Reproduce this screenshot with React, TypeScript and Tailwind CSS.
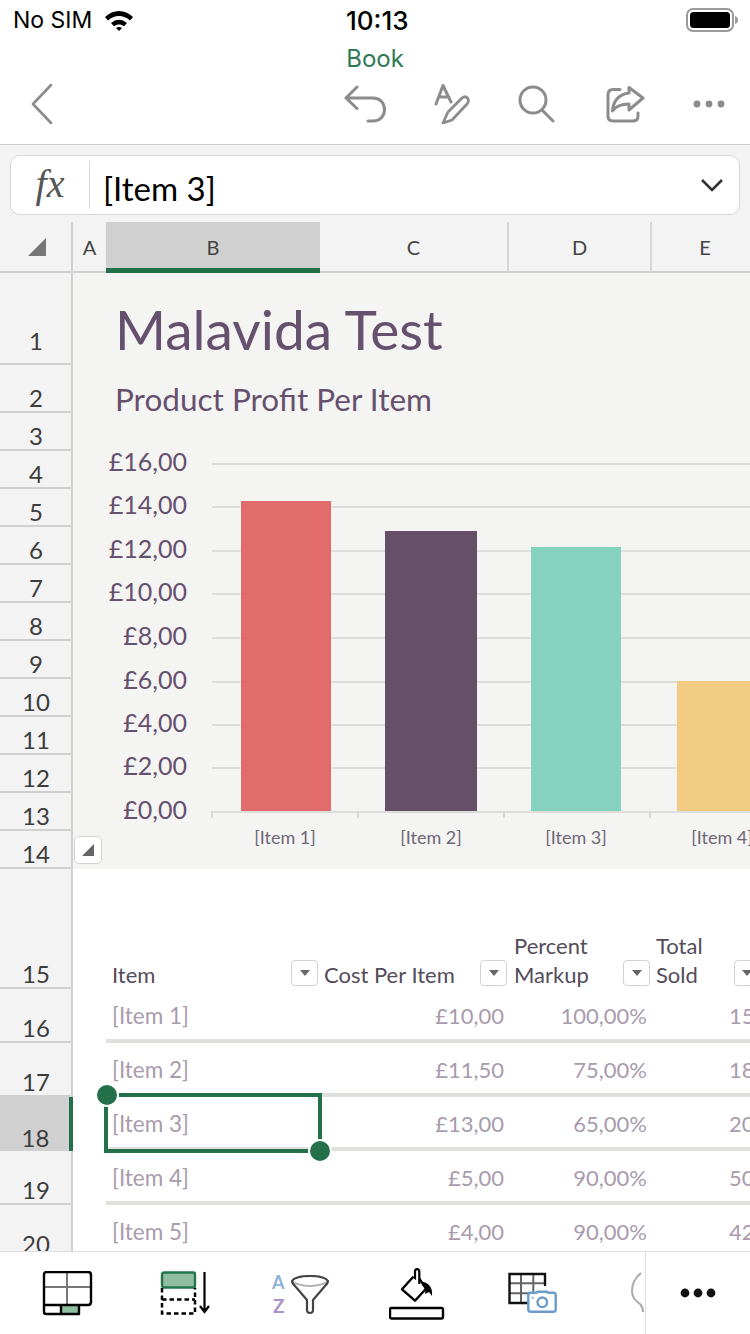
import React from "react";

const rows: [string, number][] = [
  ["1", 92], ["2", 48], ["3", 38], ["4", 38], ["5", 38], ["6", 38], ["7", 38],
  ["8", 38], ["9", 38], ["10", 38], ["11", 38], ["12", 38], ["13", 38], ["14", 38],
  ["15", 120], ["16", 54], ["17", 54], ["18", 54], ["19", 54], ["20", 54],
];

const items = [
  ["[Item 1]", "£10,00", "100,00%", "15"],
  ["[Item 2]", "£11,50", "75,00%", "18"],
  ["[Item 3]", "£13,00", "65,00%", "20"],
  ["[Item 4]", "£5,00", "90,00%", "50"],
  ["[Item 5]", "£4,00", "90,00%", "42"],
];

const yLabels: [string, number][] = [
  ["£16,00", 464], ["£14,00", 507], ["£12,00", 551], ["£10,00", 594], ["£8,00", 638],
  ["£6,00", 682], ["£4,00", 725], ["£2,00", 768], ["£0,00", 812],
];

function FilterButton() {
  return (
    <span className="flex h-[26px] w-[27px] shrink-0 items-center justify-center rounded-[4px] border border-[#d2d2d2] bg-white">
      <svg width="12" height="8" viewBox="0 0 12 8"><path d="M1 1h10L6 7z" fill="#666" /></svg>
    </span>
  );
}

function TopIcons() {
  const s = { fill: "none", stroke: "#8c8c8c", strokeWidth: 3, strokeLinecap: "round" as const, strokeLinejoin: "round" as const };
  return (
    <div className="flex h-[56px] items-center justify-between pl-[31px] pr-[25px]">
      <svg width="22" height="40" viewBox="0 0 22 40"><path d="M20 1 2 20l18 19" {...s} strokeWidth={2.6} /></svg>
      <div className="flex items-center">
        <svg width="42" height="38" viewBox="0 0 42 38" className="mr-[48px]">
          <path d="M13 2 2 13l11 10.500M2 13h27c7 0 11.500 5 11.500 11.500S36 36 29 36h-5" {...s} />
        </svg>
        <svg width="36" height="40" viewBox="0 0 36 40" className="mr-[48px]">
          <path d="M2 20 9 1.500 17 18M5 13h10" {...s} />
          <path d="M9 39 14 28 28 14c2-1.500 4-1.500 5.500 0 1.500 2 1 4-.5 6L18 36z" {...s} strokeWidth={2.8} />
        </svg>
        <svg width="38" height="38" viewBox="0 0 38 38" className="mr-[49px]">
          <circle cx="15" cy="15" r="13" {...s} />
          <path d="M25 26l10 10" {...s} />
        </svg>
        <svg width="40" height="38" viewBox="0 0 40 38" className="mr-[48px]">
          <path d="M15 4.500H8Q3 4.500 3 10v21q0 5 5 5h20q5 0 5-5v-3" {...s} />
          <path d="M24 2.500 38 13 24 25v-6C16 19 11 21 7.500 26 8 16 14 9 24 8z" {...s} />
        </svg>
        <svg width="32" height="8" viewBox="0 0 32 8">
          <circle cx="4" cy="4" r="3.400" fill="#8c8c8c" /><circle cx="16" cy="4" r="3.400" fill="#8c8c8c" /><circle cx="28" cy="4" r="3.400" fill="#8c8c8c" />
        </svg>
      </div>
    </div>
  );
}

function Chart() {
  const sans = "'Lato', 'Liberation Sans', sans-serif";
  return (
    <svg width="677" height="438" viewBox="73 430 677 438" className="block" style={{ fontFamily: sans }}>
      {yLabels.map(([t, y]) => (
        <g key={t}>
          <line x1="212" x2="750" y1={y} y2={y} stroke="#dcdcd8" strokeWidth="2" />
          <text x="187" y={y + 7} textAnchor="end" fontSize="25" fill="#65506d">{t}</text>
        </g>
      ))}
      <rect x="241" y="501" width="90" height="310" fill="#e26b6b" />
      <rect x="385" y="531" width="92" height="280" fill="#674f69" />
      <rect x="531" y="547" width="90" height="264" fill="#85d2bf" />
      <rect x="677" y="681" width="73" height="130" fill="#f1cc82" />
      {[212, 358, 504, 650].map((x) => (
        <line key={x} x1={x} x2={x} y1="811" y2="818" stroke="#d8d8d4" strokeWidth="2" />
      ))}
      {[["[Item 1]", 285], ["[Item 2]", 431], ["[Item 3]", 576], ["[Item 4]", 722]].map(([t, x]) => (
        <text key={t} x={x} y="844" textAnchor="middle" fontSize="18" fill="#6f6776">{t}</text>
      ))}
    </svg>
  );
}

function BottomIcons() {
  return (
    <div className="flex h-[83px] shrink-0 border-t border-[#dedede] bg-white">
      <div className="relative flex w-[645px] shrink-0 items-start overflow-hidden">
        <svg width="52" height="46" viewBox="0 0 52 46" className="ml-[42px] mt-[19px] shrink-0">
          <path d="M25 2v32M2 16h47" stroke="#777" strokeWidth="2" fill="none" />
          <rect x="19" y="34" width="18" height="9" fill="#8fbf9f" />
          <path d="M2 34V4q0-3 3-3h41q3 0 3 3v27q0 3-3 3H2zv7q0 2 2 2h33V34M19 34v9" stroke="#000" strokeWidth="2.400" fill="none" strokeLinejoin="round" />
        </svg>
        <svg width="54" height="46" viewBox="0 0 54 46" className="ml-[66px] mt-[19px] shrink-0">
          <rect x="2" y="1.500" width="33" height="15" rx="2" fill="#8fbf9f" stroke="#23754c" strokeWidth="2.400" />
          <path d="M2 17v25.500h33V17M2 28.500h33" stroke="#000" strokeWidth="2.500" strokeDasharray="4.500 3" fill="none" />
          <path d="M44.500 1v40M40 35l4.500 6 4.500-6" stroke="#000" strokeWidth="2.200" fill="none" />
        </svg>
        <svg width="60" height="42" viewBox="0 0 60 42" className="ml-[58px] mt-[23px] shrink-0" style={{ fontFamily: "'Lato', sans-serif" }}>
          <text x="0" y="14" fontSize="18" fontWeight="700" fill="#8fb1da">A</text>
          <text x="1" y="38" fontSize="19" fontWeight="700" fill="#a893c4">Z</text>
          <path d="M20 7q18 8 36 0" fill="none" stroke="#b5b5b5" strokeWidth="2" />
          <path d="M20 6c2-3 9-5 18-5s16 2 18 5c0 2-1 3-3 5L41 25v10q0 3-3 3t-3-3V25L23 11c-2-2-3-3-3-5z" fill="none" stroke="#444" strokeWidth="2.200" strokeLinejoin="round" />
        </svg>
        <svg width="56" height="52" viewBox="0 0 56 52" className="ml-[57px] mt-[16px] shrink-0">
          <path d="M24.300 8.700 13 21.300l13 11.400L37 20.700" fill="none" stroke="#000" strokeWidth="2.400" strokeLinejoin="round" />
          <path d="M24.300 8.700 26 10V3.700q0-2.500 2.100-2.500t2.200 2.500V16" fill="none" stroke="#000" strokeWidth="2.200" />
          <path d="M30.300 10.700 37 20.700" fill="none" stroke="#000" strokeWidth="2.400" />
          <path d="M34 14c6 1 10 6 9 14l-3-4-4 2c1-4 0-7-3-9z" fill="#000" />
          <rect x="1" y="40" width="53" height="10.500" rx="1.500" fill="#fff" stroke="#000" strokeWidth="2.400" />
        </svg>
        <svg width="50" height="42" viewBox="0 0 50 42" className="ml-[63px] mt-[20px] shrink-0">
          <path d="M13 2v29M25.300 2v19M1.500 11.300H37M1.500 21.300H21" fill="none" stroke="#666" strokeWidth="2" />
          <path d="M20 31H1.500V2H37v11" fill="none" stroke="#111" strokeWidth="2.400" strokeLinecap="round" />
          <path d="M20.300 23q0-2.300 2.300-2.300h6l1-1h9.500l1 1h5.300q2.300 0 2.300 2.300v14.500q0 2.200-2.300 2.200H22.600q-2.300 0-2.300-2.200z" fill="#fff" stroke="#6a9ccc" strokeWidth="2.400" />
          <circle cx="34.300" cy="30.300" r="4.800" fill="none" stroke="#6a9ccc" strokeWidth="2.400" />
          <circle cx="24.700" cy="25.700" r="1" fill="#6a9ccc" />
        </svg>
        <svg width="14" height="42" viewBox="0 0 14 42" className="absolute left-[631px] top-[20px]">
          <path d="M10 1C4 6 1 13 1 19c0 7 4 10 8 13 2 2 3 5 3 8" fill="none" stroke="#aaa" strokeWidth="2" />
        </svg>
      </div>
      <div className="flex flex-1 items-start justify-center border-l border-[#dedede] pt-[36px]">
        <svg width="36" height="10" viewBox="0 0 36 10">
          <circle cx="5" cy="5" r="4.400" fill="#111" /><circle cx="18" cy="5" r="4.400" fill="#111" /><circle cx="31" cy="5" r="4.400" fill="#111" />
        </svg>
      </div>
    </div>
  );
}

export default function App() {
  return (
    <div className="flex h-[1334px] w-[750px] flex-col overflow-hidden bg-white font-['Lato','Liberation_Sans',sans-serif]">
      {/* Status bar */}
      <div className="relative flex h-[40px] shrink-0 items-center justify-between pl-[13px] pr-[12px] font-['Inter',sans-serif] text-[23px] text-black">
        <div className="flex items-center gap-[12px]">
          <span>No SIM</span>
          <svg width="30" height="22" viewBox="0 0 30 22">
            <path d="M1 8c8-8 20-8 28 0l-3 3.500c-6-6-16-6-22 0z" fill="#000" />
            <path d="M7 14c5-4.500 11-4.500 16 0l-3 3.300c-3-2.500-7-2.500-10 0z" fill="#000" />
            <path d="M12 19c2-1.500 4-1.500 6 0l-3 3z" fill="#000" />
          </svg>
        </div>
        <span className="absolute left-[346px] text-[26px] font-medium">10:13</span>
        <svg width="52" height="24" viewBox="0 0 52 24">
          <rect x="1" y="1" width="46" height="22" rx="6" fill="#fff" stroke="#9a9a9a" strokeWidth="2" />
          <rect x="4" y="4" width="40" height="16" rx="3.500" fill="#000" />
          <path d="M49 8q3 1 3 4t-3 4z" fill="#9a9a9a" />
        </svg>
      </div>
      {/* Title + actions */}
      <div className="h-[105px] shrink-0 border-b border-[#cfcfcf]">
        <div className="h-[36px] pt-[4px] text-center font-['Inter',sans-serif] text-[24px] leading-[30px] text-[#2f7a57]">Book</div>
        <TopIcons />
      </div>
      {/* Formula bar */}
      <div className="h-[77px] shrink-0 bg-[#f3f3f3] px-[10px] pt-[10px]">
        <div className="flex h-[60px] items-center rounded-[10px] border border-[#d6d6d6] bg-white">
          <div className="flex h-[48px] w-[79px] items-center justify-center border-r border-[#d9d9d9] pb-[2px] font-['Liberation_Serif',serif] text-[40px] italic text-[#555]">fx</div>
          <div className="flex-1 pl-[13px] pt-[6px] text-[33px] leading-[40px] text-black">[Item 3]</div>
          <svg width="24" height="14" viewBox="0 0 24 14" className="mr-[15px]">
            <path d="M2 2l10 10L22 2" fill="none" stroke="#333" strokeWidth="2.600" />
          </svg>
        </div>
      </div>
      {/* Column headers */}
      <div className="flex h-[51px] shrink-0 border-b-2 border-[#d0d0d0] bg-[#f3f3f3] text-[20px] leading-[51px] text-[#444]">
        <div className="flex w-[73px] shrink-0 items-center justify-start border-r-2 border-[#d0d0d0] pl-[28px]">
          <svg width="18" height="18" viewBox="0 0 18 18"><path d="M18 0v18H0z" fill="#777" /></svg>
        </div>
        <div className="w-[33px] shrink-0 text-center">A</div>
        <div className="h-[51px] w-[214px] shrink-0 border-b-[5px] border-[#23704a] bg-[#d0d0d0] text-center">B</div>
        <div className="w-[189px] shrink-0 border-r-2 border-[#d6d6d6] text-center">C</div>
        <div className="w-[143px] shrink-0 border-r-2 border-[#d6d6d6] text-center">D</div>
        <div className="flex-1 pl-[8px] text-center">E</div>
      </div>
      {/* Sheet */}
      <div className="flex min-h-0 flex-1 overflow-hidden">
        <div className="w-[73px] shrink-0 border-r-2 border-[#d0d0d0] bg-[#f3f3f3]">
          {rows.map(([n, h]) => (
            <div
              key={n}
              style={{ height: h }}
              className={
                n === "18"
                  ? "relative -mr-[2px] flex items-end justify-center border-r-4 border-[#23704a] bg-[#d0d0d0] pl-[2px] text-[24px] leading-[26px] text-[#3c3c3c]"
                  : n === "1"
                  ? "flex items-end justify-center border-b-2 border-[#d0d0d0] pb-[9px] pl-[1px] text-[24px] leading-[26px] text-[#3c3c3c]"
                  : "flex items-end justify-center border-b-2 border-[#d0d0d0] pl-[1px] text-[24px] leading-[26px] text-[#3c3c3c]"
              }
            >
              {n}
            </div>
          ))}
        </div>
        <div className="relative min-w-0 flex-1">
          <div className="relative h-[596px] overflow-hidden bg-[#f4f4f3]">
            <div className="h-[157px] pl-[42px] text-[#65506d]">
              <div className="pt-[21px] text-[55px] leading-[70px]">Malavida Test</div>
              <div className="pt-[14px] text-[31.500px] leading-[42px]">Product Profit Per Item</div>
            </div>
            <Chart />
            <div className="absolute left-[1px] top-[563px] flex h-[28px] w-[28px] items-center justify-center rounded-[5px] border border-[#d2d2d2] bg-white">
              <svg width="14" height="14" viewBox="0 0 14 14"><path d="M13 1v12H1z" fill="#666" /></svg>
            </div>
          </div>
          {/* Table */}
          <div className="overflow-hidden pl-[33px]">
            <div className="grid h-[120px] w-[645px] grid-cols-[214px_188px_143px_100px] items-end text-[22px] leading-[29px] text-[#544c5a]">
              <div className="flex items-end justify-between pl-[6px] pr-[2px]"><span>Item</span><span className="mb-[3px]"><FilterButton /></span></div>
              <div className="flex items-end justify-between pl-[4px] pr-[1px]"><span>Cost Per Item</span><span className="mb-[3px]"><FilterButton /></span></div>
              <div className="flex items-end justify-between pl-[6px] pr-[1px]"><span>Percent<br />Markup</span><span className="mb-[3px]"><FilterButton /></span></div>
              <div className="flex items-end gap-[31px] pl-[5px]"><span>Total<br />Sold</span><span className="mb-[3px]"><FilterButton /></span></div>
            </div>
            {items.map((r) => (
              <div key={r[0]} className="grid h-[54px] w-[645px] grid-cols-[214px_188px_143px_100px] border-b-4 border-[#e0e0da] pt-[2px] text-[22px] leading-[50px] text-[#a99bad]">
                <div className="pl-[6px] text-[22.500px]">{r[0]}</div>
                <div className="pr-[4px] text-right">{r[1]}</div>
                <div className="pr-[4px] text-right">{r[2]}</div>
                <div className="pl-[78px]">{r[3]}</div>
              </div>
            ))}
          </div>
          {/* Selection overlay */}
          <div className="absolute left-[31px] top-[820px] h-[60px] w-[218px] border-4 border-[#23704a]" />
          <div className="absolute left-[22px] top-[810px] h-[24px] w-[24px] rounded-full border-2 border-white bg-[#23704a]" />
          <div className="absolute left-[235px] top-[866px] h-[24px] w-[24px] rounded-full border-2 border-white bg-[#23704a]" />
        </div>
      </div>
      <BottomIcons />
    </div>
  );
}
